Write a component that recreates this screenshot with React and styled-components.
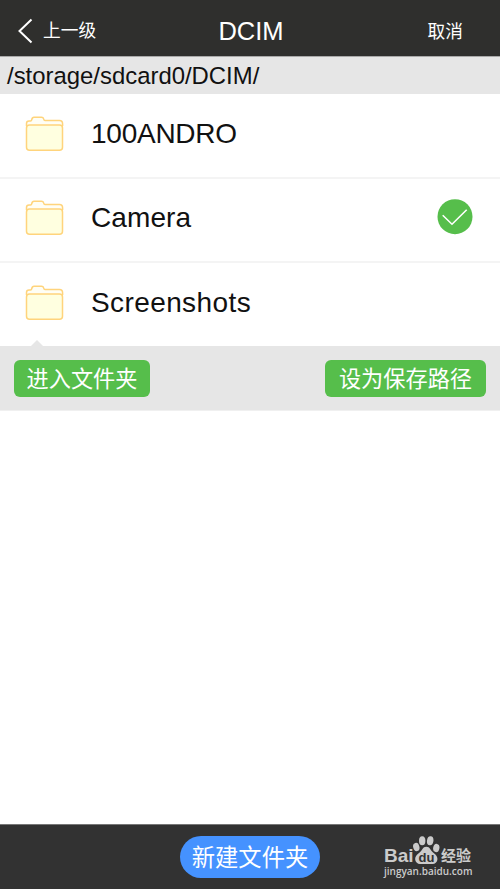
import styled, { createGlobalStyle } from 'styled-components'

const GlobalStyle = createGlobalStyle`
body{
  margin:0;
  background:#fff;
  font-family:"Liberation Sans", "Noto Sans CJK SC", sans-serif;
}
*{
  box-sizing:border-box;
}
button{
  border:0;
  padding:0;
  font-family:inherit;
  white-space:nowrap;
}
`;

const Screen = styled.div`
display:flex;
flex-direction:column;
width:100%;
height:100vh;
overflow:hidden;
`;

const Header = styled.header`
display:grid;
grid-template-columns:1fr auto 1fr;
align-items:center;
height:56px;
padding:6px 37px 0 17px;
flex-shrink:0;
background:#2f2f2d;
color:#fff;
`;

const HeaderButton = styled.button`
display:flex;
align-items:center;
gap:10px;
justify-self:${({ $end }) => ($end ? 'end' : 'start')};
padding-top:${({ $end }) => ($end ? '1px' : '0')};
background:none;
color:#fff;
font-size:17.7px;
line-height:26px;
`;

const Title = styled.h1`
margin:0 0 0 22px;
font-size:25.5px;
font-weight:400;
line-height:30px;
`;

const PathBar = styled.div`
height:38px;
padding:1px 7px 0;
flex-shrink:0;
border-top:1px solid #a9a9a9;
background:#e6e6e6;
color:#111;
font-size:23.9px;
line-height:36px;
`;

const FolderList = styled.ul`
margin:0;
padding:0;
list-style:none;
flex-shrink:0;
`;

const FolderRow = styled.li`
display:flex;
align-items:center;
height:${({ $last }) => ($last ? '83px' : '84.5px')};
padding:0 27px 3px 25px;
border-bottom:${({ $last }) => ($last ? '0' : '2px solid #f4f4f4')};

svg:last-child{
  margin-bottom:3px;
}
`;

const FolderName = styled.span`
flex:1;
margin-left:27px;
color:#111;
font-size:28px;
line-height:34px;
letter-spacing:${({ $spacing }) => $spacing || 0}px;
`;

const Actions = styled.div`
position:relative;
display:flex;
justify-content:space-between;
height:65px;
padding:14px 14px 0;
flex-shrink:0;
border-bottom:1px solid #f0f0f0;
background:#e6e6e6;

&::before{
  content:'';
  position:absolute;
  left:31px;
  top:-6px;
  border:solid transparent;
  border-width:0 6px 6px;
  border-bottom-color:#e6e6e6;
}
`;

const ActionButton = styled.button`
width:${({ $width }) => $width};
height:37px;
padding-top:1px;
border-radius:6px;
background:#56be4b;
color:#fff;
font-size:22.2px;
line-height:37px;
`;

const Footer = styled.footer`
display:grid;
grid-template-columns:1fr 140px 1fr;
height:65px;
margin-top:auto;
padding-top:11px;
flex-shrink:0;
border-top:1px solid #777;
background:#323232;
`;

const NewFolder = styled.button`
grid-column:2;
height:42px;
padding-top:1px;
border-radius:21px;
background:#4592ff;
color:#fff;
font-size:23.3px;
line-height:42px;
`;

const Watermark = styled.div`
justify-self:end;
width:88px;
margin-right:28px;
color:#cbcbcb;
`;

const Brand = styled.div`
display:flex;
align-items:flex-end;
height:29px;
font-weight:700;

svg{
  flex-shrink:0;
}
`;

const BrandName = styled.span`
width:29px;
font-size:19px;
line-height:18px;
`;

const BrandTopic = styled.span`
margin-left:1px;
font-size:15px;
line-height:18px;
white-space:nowrap;
`;

const Site = styled.div`
font-family:"Open Sans", sans-serif;
font-size:10px;
font-weight:600;
line-height:12px;
`;

const folders = [
  { name: '100ANDRO', spacing: -0.25 },
  { name: 'Camera', spacing: 0.1 },
  { name: 'Screenshots', spacing: 0.4 },
]

function BackIcon(){
return(
<svg width="16" height="26" viewBox="0 0 16 26" fill="none" stroke="#fff" strokeWidth="2">
  <path d="M14.5 1.5L2.5 13l12 11.5"/>
</svg>
);
}

function FolderIcon(){
return(
<svg width="39" height="36" viewBox="0 0 39 36" stroke="#ffd47c" strokeWidth="1.5">
  <path d="M1.5 10V7.5Q1.5 5 4 5H5.5Q6.5 5 6.8 3.5Q7.2 1.3 9 1.3H16.5Q18.3 1.3 18.7 3.2Q19 4.6 20 4.6H34.5Q37.6 4.6 37.6 8V10" fill="#fffef5"/>
  <rect x="1.5" y="9" width="36" height="25.2" rx="3" fill="#ffffe0"/>
</svg>
);
}

function CheckIcon(){
return(
<svg width="36" height="36" viewBox="0 0 36 36" fill="none">
  <circle cx="18" cy="17.7" r="17.5" fill="#56be4b"/>
  <path d="M5.7 16.2L15 25.2L29.7 10.7" stroke="#fff" strokeWidth="1.6"/>
</svg>
);
}

function PawIcon(){
return(
<svg width="27" height="29" viewBox="0 0 27 29" fill="#cbcbcb">
  <ellipse cx="9.2" cy="4.8" rx="3.2" ry="4.5"/>
  <ellipse cx="17.2" cy="4.8" rx="3.2" ry="4.5" transform="rotate(8 17.2 4.8)"/>
  <ellipse cx="3.3" cy="11" rx="3.1" ry="4.2" transform="rotate(-15 3.3 11)"/>
  <ellipse cx="23.3" cy="12" rx="3.1" ry="4.2" transform="rotate(12 23.3 12)"/>
  <path d="M13.3 10.8C9.5 10.8 9.5 14.5 6 17C2 20 1.5 23 2.8 25.5C4.8 29.2 10 27.9 13.3 27.9S21.8 29.2 23.8 25.5C25.1 23 24.5 20 20.7 17C17.3 14.5 17.2 10.8 13.3 10.8Z"/>
  <text x="13.4" y="26" textAnchor="middle" fill="#323232" fontSize="13" fontWeight="700">du</text>
</svg>
);
}

export default function App(){
return(
<Screen>
  <GlobalStyle />
  <Header>
    <HeaderButton><BackIcon />上一级</HeaderButton>
    <Title>DCIM</Title>
    <HeaderButton $end>取消</HeaderButton>
  </Header>

  <PathBar>/storage/sdcard0/DCIM/</PathBar>

  <FolderList>
    {folders.map(({ name, spacing }, i) => (
      <FolderRow key={name} $last={i === folders.length - 1}>
        <FolderIcon />
        <FolderName $spacing={spacing}>{name}</FolderName>
        {name === 'Camera' && <CheckIcon />}
      </FolderRow>
    ))}
  </FolderList>

  <Actions>
    <ActionButton $width="136px">进入文件夹</ActionButton>
    <ActionButton $width="161px">设为保存路径</ActionButton>
  </Actions>

  <Footer>
    <NewFolder>新建文件夹</NewFolder>
    <Watermark>
      <Brand>
        <BrandName>Bai</BrandName>
        <PawIcon />
        <BrandTopic>经验</BrandTopic>
      </Brand>
      <Site>jingyan.baidu.com</Site>
    </Watermark>
  </Footer>
</Screen>
);
}
